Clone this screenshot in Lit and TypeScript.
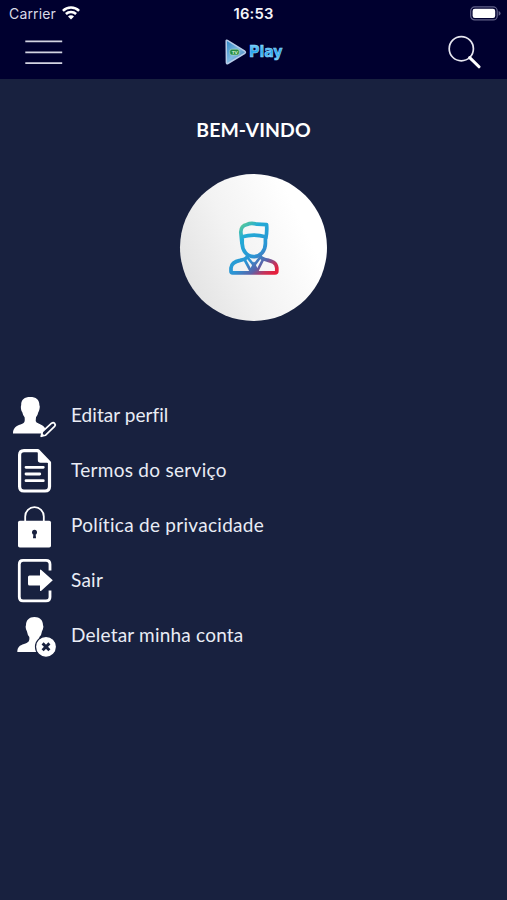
import { LitElement, html, svg, css } from "lit";
import { customElement } from "lit/decorators.js";

const bust = "M30.2 9C36 9 39.3 11.6 39.4 17Q40.2 18.5 39.5 21Q39 23.4 38.3 24.2Q37.8 27 36 29.2Q35.2 33 36.6 34.6C41 36.5 44 38 45.4 40.8L41.5 45.5H13C13 40 16 38 20.5 36.5C24.3 35.2 25.2 34.2 24.6 29.2Q22.8 27 22.3 24.2Q21.4 23.4 21 21Q20.6 18.5 21.2 17C21.1 11.6 24.6 9 30.2 9Z";

const items = [
  {
    label: "Editar perfil",
    spacing: 0.05,
    icon: svg`<path fill="#fff" d=${bust}/>
      <path d="M41.2 48.3L42.4 43.6L51.6 35.2Q53.3 34 54.6 35.4Q55.9 36.9 54.6 38.4L45.6 47.2Z"
        fill="#18213f" stroke="#fff" stroke-width="1.7" stroke-linejoin="round"/>
      <path d="M41 48.7L42 45L44.4 47.5Z" fill="#fff"/>`,
  },
  {
    label: "Termos do serviço",
    spacing: 0.29,
    icon: svg`<path d="M38 7.6H24Q19.6 7.6 19.6 12V43.5Q19.6 48 24 48H45Q49.5 48 49.5 43.5V19.5Z"
        fill="none" stroke="#fff" stroke-width="3.2" stroke-linejoin="round"/>
      <path d="M37.8 7.6V17Q37.8 19.8 40.5 19.8H50.5Z" fill="#fff"/>
      <path d="M26 24.3H43.3M26 31H39.8M26 37.7H43.3" stroke="#fff" stroke-width="2.8" stroke-linecap="round"/>`,
  },
  {
    label: "Política de privacidade",
    spacing: 0.28,
    icon: svg`<path d="M25.2 24V18.5A9.3 9.3 0 0 1 43.8 18.5V24" fill="none" stroke="#fff" stroke-width="1.8"/>
      <rect x="18" y="22.8" width="33" height="26.8" rx="1.8" fill="#fff"/>
      <circle cx="34.5" cy="34.3" r="2.5" fill="#18213f"/>
      <path d="M33.5 35H35.5L36 40.3H33Z" fill="#18213f"/>`,
  },
  {
    label: "Sair",
    spacing: 0.25,
    icon: svg`<path d="M50 17.5V11.2Q50 7.3 46 7.3H23Q19.3 7.3 19.3 11.2V44Q19.3 47.9 23 47.9H46Q50 47.9 50 44V37.5"
        fill="none" stroke="#fff" stroke-width="2.8"/>
      <path d="M29.5 22.6H40V17.5Q40 16 41.3 17L52.8 27.3L41.3 37.7Q40 38.6 40 37.2V32.4H29.5Q28 32.4 28 30.9V24.1Q28 22.6 29.5 22.6Z" fill="#fff"/>`,
  },
  {
    label: "Deletar minha conta",
    spacing: 0.21,
    icon: svg`<path d="M34.4 9C39.8 9 42.9 12 43 17Q43.9 18.5 42.9 21.2L42 23.3Q41.6 27 39.4 29Q38.6 32 40 34V44H17.3C17.5 39 19.5 37.5 24 36C28.3 34.5 29.8 33.5 29.3 29Q27.5 27 26.9 23.3L26 21.2Q25.2 18.5 26 17C26 12 29.3 9 34.4 9Z" fill="#fff"/>
      <circle cx="46" cy="38.8" r="10.5" fill="#fff" stroke="#18213f" stroke-width="1.2"/>
      <path d="M42.6 35.4L49.4 42.2M49.4 35.4L42.6 42.2" stroke="#18213f" stroke-width="2.9"/>`,
  },
];

@customElement("app-root")
export class AppRoot extends LitElement {
  static styles = css`
    :host {
      display: block;
      height: 900px;
      background: #18213f;
      color: #e9ecf5;
      font-family: Lato, "Liberation Sans", sans-serif;
      overflow: hidden;
    }
    svg { display: block; }
    header { height: 79px; background: #00002f; }
    .status {
      height: 28px;
      display: grid;
      grid-template-columns: 1fr auto 1fr;
      align-items: center;
      font-family: Inter, "Liberation Sans", sans-serif;
    }
    .carrier {
      display: flex;
      align-items: center;
      gap: 6px;
      padding-left: 9px;
      font-size: 14px;
      letter-spacing: 0.15px;
      line-height: 28px;
      color: #d9dae6;
    }
    .wifi { margin-bottom: 2px; }
    .clock { font-size: 14.8px; font-weight: 600; line-height: 28px; letter-spacing: 0.15px; color: #f4f4fa; }
    .battery { justify-self: end; padding: 0 6px 2px 0; }
    .bar {
      height: 48px;
      display: grid;
      grid-template-columns: 1fr auto 1fr;
      align-items: center;
    }
    .menu { padding-left: 25px; }
    .search { justify-self: end; padding-right: 26px; }
    .logo { font-family: "DejaVu Sans", sans-serif; font-weight: 700; }
    h1 {
      margin: 37px 0 0;
      height: 28px;
      line-height: 28px;
      text-align: center;
      font-size: 19.4px;
      letter-spacing: 0.1px;
      font-weight: 700;
      color: #fff;
    }
    .avatar {
      width: 147px;
      height: 147px;
      margin: 30px auto 67px;
      border-radius: 50%;
      background: linear-gradient(65deg, #e0e0e0 5%, #f3f3f3 42%, #ffffff 78%);
      display: flex;
      align-items: center;
      justify-content: center;
    }
    ul { list-style: none; margin: 0; padding: 0; }
    li { display: flex; height: 55px; }
    .label { padding-left: 1px; font-size: 19px; line-height: 53px; white-space: nowrap; }
  `;

  render() {
    return html`
      <header>
        <div class="status">
          <div class="carrier">
            <span>Carrier</span>
            <svg class="wifi" width="18" height="14" viewBox="0 0 18 14" fill="none" stroke="#fff" stroke-width="2.5">
              <path d="M.9 4.8A11.5 11.5 0 0 1 17.1 4.8"/>
              <path d="M3.9 8A7.2 7.2 0 0 1 14.1 8"/>
              <path d="M9 13.6L6 10.5A4.2 4.2 0 0 1 12 10.5Z" fill="#fff" stroke="none"/>
            </svg>
          </div>
          <div class="clock">16:53</div>
          <svg class="battery" width="31" height="15" viewBox="0 0 31 15">
            <rect x=".7" y=".9" width="26.5" height="13" rx="4" fill="none" stroke="#62628a" stroke-width="1.2"/>
            <rect x="2.6" y="2.8" width="22.6" height="9.2" rx="2.2" fill="#fff"/>
            <path d="M28.6 5Q30.6 6 30.6 7.4T28.6 9.8Z" fill="#62628a"/>
          </svg>
        </div>
        <div class="bar">
          <svg class="menu" width="38" height="26" viewBox="0 0 38 26" stroke="#d3d4e2" stroke-width="1.7">
            <path d="M.3 2.3H37.2M.3 13.3H37.2M.3 24.2H37.2"/>
          </svg>
          <svg class="logo" width="60" height="32" viewBox="0 -2 60 32">
            <defs>
              <linearGradient id="tri" x1="0" y1="0" x2="1" y2="1">
                <stop offset="0" stop-color="#2a83c4"/><stop offset=".5" stop-color="#7fb9e2"/><stop offset="1" stop-color="#3977b5"/>
              </linearGradient>
              <linearGradient id="word" x1="0" y1="0" x2="0" y2="1">
                <stop offset="0" stop-color="#8bdcff"/><stop offset=".5" stop-color="#25a4ee"/><stop offset="1" stop-color="#77d0fc"/>
              </linearGradient>
            </defs>
            <path d="M2.2 2.8Q2.2 1.8 3.4 2.4L20.8 13.2Q22.1 14.3 20.8 15.3L3.9 25.5Q2.4 26.2 2.4 24.6Z" fill="url(#tri)" stroke="#b7cce9" stroke-width="1.5"/>
            <rect x="5.8" y="11.2" width="9.4" height="5.8" rx="2" fill="#258b42" stroke="#b3dfc1" stroke-width=".6"/>
            <text x="7.7" y="15.7" font-size="4.3" fill="#cceccc">TV</text>
            <text x="25" y="18.8" font-size="15" textLength="33.6"
              lengthAdjust="spacingAndGlyphs" fill="url(#word)" stroke="#8fd6fb" stroke-width=".6">Play</text>
          </svg>
          <svg class="search" width="35" height="34" viewBox="0 0 35 34" fill="none" stroke="#e6e6f0">
            <circle cx="15.3" cy="13.7" r="12.1" stroke-width="1.7"/>
            <path d="M23.7 22.6L33 31.8" stroke="#fff" stroke-width="3" stroke-linecap="round"/>
          </svg>
        </div>
      </header>
      <h1>BEM-VINDO</h1>
      <div class="avatar">
        <svg width="50" height="54" viewBox="0 0 50 54" fill="none" stroke="url(#hue)" stroke-width="3.7" stroke-linejoin="round" stroke-linecap="round">
          <defs>
            <linearGradient id="hue" gradientUnits="userSpaceOnUse" x1="9" y1="7" x2="46" y2="51">
              <stop offset="0" stop-color="#55c79c"/>
              <stop offset=".18" stop-color="#22acd6"/>
              <stop offset=".55" stop-color="#2b94d4"/>
              <stop offset=".75" stop-color="#5b62a8"/>
              <stop offset=".88" stop-color="#c0355f"/>
              <stop offset="1" stop-color="#e5203c"/>
            </linearGradient>
          </defs>
          <path d="M12.9 22L11.8 11Q12 4.5 18 3.5Q22 1.6 28 3.2L37.6 3.6Q38.2 11 36.8 17"/>
          <path d="M13.2 15.8V22.5C13.2 29.6 18 35.6 24.8 35.6S36.4 29.6 36.4 22.5V15.8Q25 12.4 13.2 15.8Z"/>
          <path d="M18.3 35.5Q17.5 38 11 39.4Q2.6 41 2 47V50.2Q2 51.8 3.6 51.8H46Q47.8 51.8 47.8 50.2V47C47.3 41 42 40 38 39Q32 37.6 31.4 35.5"/>
          <path d="M15.8 39L22 50.5L25 44.5L19 37M33.8 39L28 50.5L25 44.5L30.6 37" stroke-width="2.7"/>
          <path d="M25 41.5L20.5 51.5H29.5Z" fill="url(#hue)" stroke-width="1.5"/>
        </svg>
      </div>
      <ul>
        ${items.map(
          (item) => html`<li>
            <svg width="70" height="55" viewBox="0 0 70 55">${item.icon}</svg>
            <span class="label" style="letter-spacing:${item.spacing}px">${item.label}</span>
          </li>`
        )}
      </ul>
    `;
  }
}
